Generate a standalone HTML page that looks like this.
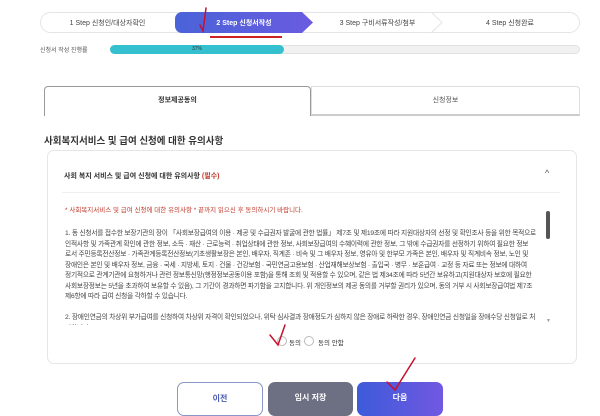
<!DOCTYPE html>
<html><head><meta charset="utf-8"><style>
*{margin:0;padding:0;box-sizing:border-box}
body{width:600px;height:413px;overflow:hidden;background:#fff;font-family:"Liberation Sans","Noto Sans CJK KR",sans-serif;color:#333;position:relative}
.a{position:absolute}
.step{position:absolute;top:12px;height:21px;font-size:7px;display:flex;align-items:center;justify-content:center;color:#444}
.line{white-space:nowrap;font-size:6.7px;letter-spacing:-0.2px;color:#444;height:10.5px;line-height:10.5px;overflow:hidden}
</style></head><body>
<div class="a" style="left:40px;top:12px;width:540px;height:21px;border:1px solid #e4e4e4;border-radius:11px"></div>
<div class="step" style="left:40px;width:135px">1 Step 신청인/대상자확인</div>
<div class="step" style="left:175px;width:138px;background:linear-gradient(90deg,#4a63d8,#6a5be0);color:#fff;border-radius:7px;clip-path:polygon(0 0,92% 0,100% 50%,92% 100%,0 100%);font-weight:bold">2 Step 신청서작성</div>
<div class="step" style="left:315px;width:125px">3 Step 구비서류작성/첨부</div>
<div class="step" style="left:440px;width:140px">4 Step 신청완료</div>
<svg class="a" style="left:0;top:0" width="600" height="40"><path d="M431 12 L442 22.5 L431 33" fill="none" stroke="#e4e4e4"/></svg>
<div class="a" style="left:210px;top:36px;width:72px;height:1.5px;background:#c22"></div>
<div class="a" style="left:40px;top:45px;font-size:6px;color:#555">신청서 작성 진행률</div>
<div class="a" style="left:110px;top:45px;width:470px;height:9px;background:#f1f1f1;border:1px solid #e2e2e2;border-radius:5px"></div>
<div class="a" style="left:110px;top:45px;width:174px;height:9px;background:#35c0d0;border-radius:5px;font-size:5px;color:#333;text-align:center;line-height:9px">37%</div>
<div class="a" style="left:44px;top:86px;width:267px;height:30px;border:1px solid #999;border-bottom:none;border-radius:4px 4px 0 0;font-size:7px;font-weight:bold;text-align:center;line-height:28px">정보제공동의</div>
<div class="a" style="left:311px;top:86px;width:269px;height:30px;border:1px solid #ddd;border-bottom:2px solid #ccc;border-radius:0 4px 0 0;font-size:7px;text-align:center;line-height:28px;color:#555">신청정보</div>
<div class="a" style="left:44px;top:133px;font-size:9.5px;font-weight:bold;color:#333">사회복지서비스 및 급여 신청에 대한 유의사항</div>
<div class="a" style="left:47px;top:150px;width:530px;height:214px;border:1px solid #e6e6e6;border-radius:7px"></div>
<div class="a" style="left:64px;top:171px;font-size:7px;font-weight:bold;color:#333">사회 복지 서비스 및 급여 신청에 대한 유의사항 <span style="color:#c0392b">(필수)</span></div>
<div class="a" style="left:545px;top:168px;font-size:9px;color:#555">^</div>
<div class="a" style="left:62px;top:192px;width:498px;height:1px;background:#eee"></div>
<div class="a" style="left:65px;top:204px;font-size:6.5px;color:#c0392b">* 사회복지서비스 및 급여 신청에 대한 유의사항 * 끝까지 읽으신 후 동의하시기 바랍니다.</div>
<div class="a" style="left:546px;top:211px;width:4px;height:28px;background:#555;border-radius:2px"></div>
<div class="a" style="left:546px;top:318px;color:#999;font-size:5px">▼</div>
<div class="a" style="left:65px;top:229px;width:478px;height:96px;overflow:hidden">
<div class="line">1. 동 신청서를 접수한 보장기관의 장이 「사회보장급여의 이용 · 제공 및 수급권자 발굴에 관한 법률」 제7조 및 제19조에 따라 지원대상자의 선정 및 확인조사 등을 위한 목적으로</div>
<div class="line">인적사항 및 가족관계 확인에 관한 정보, 소득 · 재산 · 근로능력 · 취업상태에 관한 정보, 사회보장급여의 수혜이력에 관한 정보, 그 밖에 수급권자를 선정하기 위하여 필요한 정보</div>
<div class="line">로서 주민등록전산정보 · 가족관계등록전산정보(기초생활보장은 본인, 배우자, 직계존 · 비속 및 그 배우자 정보, 영유아 및 한부모 가족은 본인, 배우자 및 직계비속 정보, 노인 및</div>
<div class="line">장애인은 본인 및 배우자 정보, 금융 · 국세 · 지방세, 토지 · 건물 · 건강보험 · 국민연금고용보험 · 산업재해보상보험 · 출입국 · 병무 · 보훈급여 · 교정 등 자료 또는 정보에 대하여</div>
<div class="line">정기적으로 관계기관에 요청하거나 관련 정보통신망(행정정보공동이용 포함)을 통해 조회 및 적용할 수 있으며, 같은 법 제34조에 따라 5년간 보유하고(지원대상자 보호에 필요한</div>
<div class="line">사회보장정보는 5년을 초과하여 보유할 수 있음), 그 기간이 경과하면 파기함을 고지합니다. 위 개인정보의 제공 동의를 거부할 권리가 있으며, 동의 거부 시 사회보장급여법 제7조</div>
<div class="line">제6항에 따라 급여 신청을 각하할 수 있습니다.</div>
<div class="line"></div>
<div class="line">2. 장애인연금의 차상위 부가급여를 신청하여 차상위 자격이 확인되었으나, 위탁 심사결과 장애정도가 심하지 않은 장애로 하락한 경우, 장애인연금 신청일을 장애수당 신청일로 처</div>
<div class="line">리합니다.</div>
</div>
<div class="a" style="left:277px;top:336px;width:10px;height:10px;border:1px solid #bbb;border-radius:50%"></div>
<div class="a" style="left:289px;top:337px;font-size:6.5px">동의</div>
<div class="a" style="left:304px;top:336px;width:10px;height:10px;border:1px solid #bbb;border-radius:50%"></div>
<div class="a" style="left:318px;top:337px;font-size:6.5px">동의 안함</div>
<div class="a" style="left:177px;top:382px;width:86px;height:34px;border:1px solid #8a96c8;border-radius:7px;font-size:8px;font-weight:bold;color:#4a5ab0;text-align:center;line-height:32px">이전</div>
<div class="a" style="left:268px;top:382px;width:85px;height:34px;background:#6d7082;border-radius:7px;font-size:8px;font-weight:bold;color:#fff;text-align:center;line-height:32px">임시 저장</div>
<div class="a" style="left:357px;top:382px;width:86px;height:34px;background:linear-gradient(90deg,#3d5bd9,#7158e2);border-radius:7px;font-size:8px;font-weight:bold;color:#fff;text-align:center;line-height:32px">다음</div>
<svg class="a" style="left:0;top:0" width="600" height="413"><g fill="none" stroke="#c8102e" stroke-width="1.5" stroke-linecap="round"><path d="M200 25 L203 31 L206 8"/><path d="M270 335 L278 345 L285 325"/><path d="M387 382 L395 390 L415 358"/></g></svg>
</body></html>
